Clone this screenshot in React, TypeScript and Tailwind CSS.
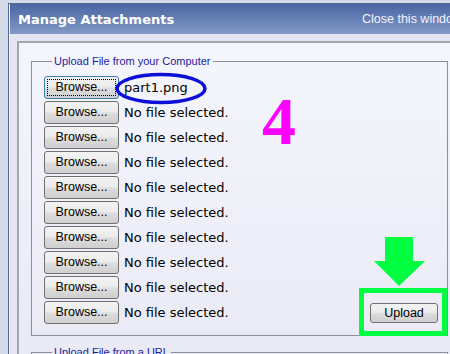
import React from 'react';

// classic Win7 push button
const btnBase =
  "flex items-center justify-center rounded-[3px] border bg-[linear-gradient(to_bottom,#f3f3f3_0%,#ebebeb_48%,#dddddd_52%,#cfcfcf_100%)] font-['Liberation_Sans',sans-serif] text-[12.5px] text-black leading-none";

const rows = [
  'part1.png',
  'No file selected.',
  'No file selected.',
  'No file selected.',
  'No file selected.',
  'No file selected.',
  'No file selected.',
  'No file selected.',
  'No file selected.',
  'No file selected.',
];

function BrowseRow({ label, focused }: { label: string; focused: boolean }) {
  return (
    <div className="flex h-[23px] items-center gap-[5px]">
      <button
        type="button"
        className={`${btnBase} h-[23px] w-[75px] p-[2px] ${
          focused ? 'border-[#3c7fb1]' : 'border-[#707070]'
        }`}
      >
        <span
          className={`flex h-full w-full items-center justify-center border ${
            focused ? 'border-dotted border-black' : 'border-transparent'
          }`}
        >
          Browse...
        </span>
      </button>
      <span className="whitespace-nowrap font-['DejaVu_Sans',sans-serif] text-[13px] leading-none text-black">
        {label}
      </span>
    </div>
  );
}

export default function App() {
  return (
    <div className="relative h-[354px] w-[450px] overflow-hidden bg-[#d3dbe8] pl-[8px] pt-[3px]">
      <div className="h-full border-l border-t border-[#56698f] bg-[#eef1f6] pl-px">
        <div className="flex h-full w-[480px] flex-col bg-[#e4e5f0]">
          {/* title bar */}
          <div className="flex h-[30px] shrink-0 items-center bg-[linear-gradient(to_bottom,#4a66a3,#829ac7)] pl-[8px] text-white">
            <div className="w-[344px] pt-[2px] font-['DejaVu_Sans',sans-serif] text-[13px] font-bold">
              Manage Attachments
            </div>
            <div className="whitespace-nowrap font-['Liberation_Sans',sans-serif] text-[12.5px] text-[#f2f4ff]">
              Close this window
            </div>
          </div>

          <div className="flex-1 pl-[7px] pt-[7px]">
            <div className="h-full border-l-2 border-t-2 border-[#a6a6ae] bg-[linear-gradient(to_bottom,#f5f5fd,#e9e9f5)] pl-[12px] pt-[12px]">
              <fieldset className="w-[417px] border border-[#8e8f94] pb-[11px] pl-[12px] pr-[9px] pt-[9px]">
                <legend className="ml-[8px] px-[2px] font-['Liberation_Sans',sans-serif] text-[11px] leading-[12px] text-[#1d1d9b]">
                  Upload File from your Computer
                </legend>
                <div className="flex">
                  <div className="flex flex-col gap-[2px]">
                    {rows.map((r, i) => (
                      <BrowseRow key={i} label={r} focused={i === 0} />
                    ))}
                  </div>
                  <button
                    type="button"
                    className={`${btnBase} mb-px ml-auto h-[20px] w-[68px] self-end border-[#707070]`}
                  >
                    Upload
                  </button>
                </div>
              </fieldset>

              <fieldset className="mt-[10px] h-[40px] w-[417px] border border-[#8e8f94] pl-[12px]">
                <legend className="ml-[8px] px-[2px] font-['Liberation_Sans',sans-serif] text-[11px] leading-[12px] text-[#1d1d9b]">
                  Upload File from a URL
                </legend>
              </fieldset>
            </div>
          </div>
        </div>
      </div>

      {/* annotations drawn over the screenshot */}
      <svg className="absolute left-[114px] top-[72px]" width="94" height="34" viewBox="0 0 94 34">
        <ellipse cx="47" cy="16.5" rx="44" ry="14" fill="none" stroke="#0a10d8" strokeWidth="3.5" />
      </svg>

      <div className="absolute left-[262px] top-[87px] font-['Liberation_Serif',serif] text-[68px] font-bold leading-none text-[#ff00ff]">
        4
      </div>

      <svg className="absolute left-[370px] top-[234px]" width="60" height="56" viewBox="0 0 60 56">
        <polygon points="15,3 43,3 43,27 55,27 29,52 4,27 15,27" fill="#00ff40" />
      </svg>

      <div className="absolute left-[359px] top-[288px] h-[48px] w-[88px] border-[5px] border-[#00ff40]" />
    </div>
  );
}
